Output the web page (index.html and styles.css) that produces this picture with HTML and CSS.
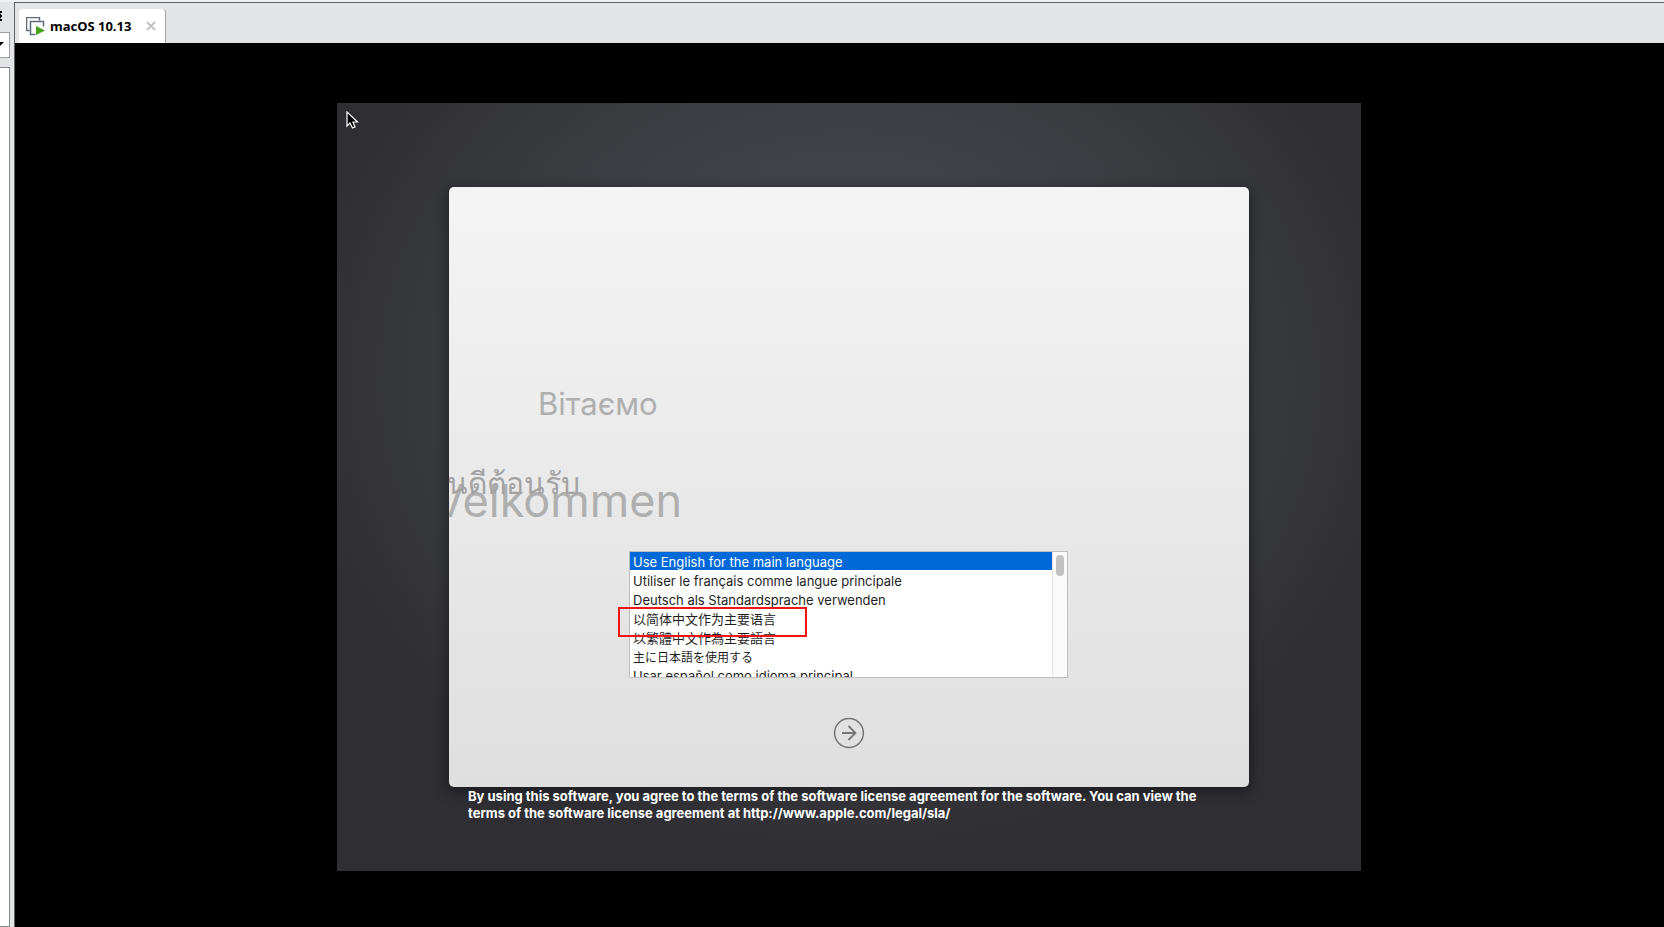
FILE: index.html
```html
<!DOCTYPE html>
<html lang="en">
<head>
<meta charset="utf-8">
<title>macOS 10.13</title>
<link rel="stylesheet" href="styles.css">
</head>
<body>
<div class="window">
  <aside class="sidebar">
    <button class="sidebar-close" aria-label="Close library">
      <svg width="10" height="10" viewBox="0 0 10 10"><path d="M2 1H0M-2 1l3 4-3 4M2 9H0" fill="none" stroke="#000" stroke-width="2"/></svg>
    </button>
    <button class="sidebar-filter" aria-label="Filter">
      <svg width="8" height="6" viewBox="0 0 8 6"><path d="M-3 0h7L0 4z" fill="#000"/></svg>
    </button>
    <div class="sidebar-tree"></div>
  </aside>
  <main class="workspace">
    <nav class="tabs">
      <div class="tab">
        <svg class="tab-icon" width="19" height="19" viewBox="0 0 19 19">
          <path d="M3.500 13.500h-3v-13h13v3" fill="none" stroke="#5d6b7b" stroke-width="1.500"/>
          <path d="M9.500 17.500h-5v-13h13v5" fill="none" stroke="#5d6b7b" stroke-width="1.500"/>
          <path d="M10 9v9l9-4.500z" fill="#46a01a"/>
        </svg>
        <span class="tab-title">macOS 10.13</span>
        <button class="tab-close" aria-label="Close tab">
          <svg width="10" height="10" viewBox="0 0 10 10"><path d="M1 1l8 8M9 1l-8 8" stroke="#c3c3c3" stroke-width="2"/></svg>
        </button>
      </div>
    </nav>
    <div class="viewport">
      <section class="guest">
        <svg class="cursor" width="13" height="19" viewBox="0 0 13 19">
          <path d="M1 1v14l3-3 2.500 5 2.500-1-2-5h4.500z" fill="#000" stroke="#fff" stroke-width="1.200"/>
        </svg>
        <form class="panel">
          <div class="greetings">
            <span class="greeting greeting-uk" lang="uk">Вітаємо</span>
            <span class="greeting greeting-da" lang="da">Velkommen</span>
            <span class="greeting greeting-th" lang="th">ยินดีต้อนรับ</span>
          </div>
          <div class="picker">
            <select class="languages" size="7" aria-label="Language">
              <option selected>Use English for the main language</option>
              <option>Utiliser le français comme langue principale</option>
              <option>Deutsch als Standardsprache verwenden</option>
              <option class="chinese" lang="zh-Hans">以简体中文作为主要语言</option>
              <option class="chinese" lang="zh-Hant">以繁體中文作為主要語言</option>
              <option class="japanese" lang="ja">主に日本語を使用する</option>
              <option>Usar español como idioma principal</option>
            </select>
            <div class="scroll-track"><div class="scroll-thumb"></div></div>
            <div class="highlight"></div>
          </div>
          <button class="next" type="button" aria-label="Continue">
            <svg width="32" height="32" viewBox="0 0 32 32" fill="none" stroke="#757575">
              <circle cx="16" cy="16" r="14.400" stroke-width="1.500"/>
              <path d="M9 16h14M15.500 9l7 7-7 7" stroke-width="1.800"/>
            </svg>
          </button>
        </form>
        <p class="license">By using this software, you agree to the terms of the software license agreement for the software. You can view the terms of the software license agreement at http://www.apple.com/legal/sla/</p>
      </section>
    </div>
  </main>
</div>
</body>
</html>
```
FILE: styles.css
```css
* { box-sizing: border-box; }

body {
  margin: 0;
  background: #e3e4e6;
  font-family: Inter, "Noto Sans CJK SC", sans-serif;
}

button {
  display: block;
  padding: 0;
  border: 0;
  background: none;
}

svg { display: block; }

.window {
  display: flex;
  height: 100vh;
  overflow: hidden;
  border-top: 2px solid #f0f0f0;
}

.sidebar {
  display: flex;
  flex-direction: column;
  width: 14px;
  padding-right: 4px;
}

.sidebar-close { padding-top: 9px; height: 30px; }
.sidebar-close svg { margin-bottom: 11px; }

.sidebar-filter {
  height: 26px;
  border: 1px solid #a0a0a0;
  border-left: 0;
  background: #fff;
}

.sidebar-tree {
  flex: 1;
  margin-top: 9px;
  border: 1px solid #828790;
  border-left: 0;
  background: #fff;
}

.workspace {
  display: flex;
  flex-direction: column;
  flex: 1;
  min-width: 0;
  border-top: 1px solid #646464;
  border-left: 1px solid #646464;
}

.tabs {
  display: flex;
  align-items: flex-end;
  height: 40px;
  padding-left: 4px;
}

.tab {
  display: flex;
  align-items: center;
  width: 147px;
  height: 34px;
  padding: 0 9px 0 7px;
  border-right: 1px solid #a0a0a0;
  border-radius: 4px 4px 0 0;
  background: #fff;
}

.tab-title {
  margin-left: 5px;
  font: bold 13px/16px "Noto Sans", sans-serif;
  color: #000;
}

.tab-close { margin-left: auto; }

.viewport {
  display: flex;
  flex: 1;
  justify-content: center;
  align-items: flex-start;
  padding: 60px 0 0 19px;
  background: #000;
}

.guest {
  position: relative;
  width: 1024px;
  height: 768px;
  padding: 84px 112px 0;
  background: radial-gradient(ellipse 560px 480px at 50% 36%, #4a4b4f 0%, #404146 50%, #37383c 78%, #2f2e33 100%);
}

.cursor {
  position: absolute;
  top: 8px;
  left: 9px;
}

.panel {
  display: flex;
  flex-direction: column;
  align-items: center;
  height: 600px;
  border-radius: 5px;
  background: linear-gradient(#f4f4f4, #dfdfdf);
  box-shadow: 0 3px 14px rgba(0, 0, 0, 0.5);
}

.greetings {
  position: relative;
  width: 100%;
  height: 364px;
  overflow: hidden;
}

.greeting {
  position: absolute;
  white-space: nowrap;
  color: #afafaf;
}

.greeting-uk {
  top: 197px;
  left: 89px;
  font-size: 31px;
  line-height: 40px;
}

.greeting-da {
  top: 284px;
  right: 567px;
  font-size: 45px;
  line-height: 60px;
}

.greeting-th {
  top: 276px;
  right: 669px;
  font-size: 30px;
  line-height: 40px;
  color: #a3a3a3;
}

.picker {
  position: relative;
  display: flex;
  width: 439px;
  height: 127px;
  margin-right: 1px;
  border: 1px solid #bfbfbf;
  background: #fff;
}

.languages {
  flex: 1;
  height: 125px;
  padding: 0;
  border: 0;
  outline: 0;
  border-radius: 0;
  overflow: hidden;
  background: #fff;
  color: #1e1e1e;
  font: 13px/18px Inter, "Noto Sans CJK SC", sans-serif;
}

.languages option {
  height: 18px;
  min-height: 18px;
  margin-bottom: 1px;
  padding: 2px 3px 0;
}

.languages option:checked {
  background: linear-gradient(#0069d9, #0069d9);
  color: #fff;
}

.languages .chinese { padding-top: 0; }

.languages .japanese {
  padding-top: 1px;
  font-size: 12px;
}

.scroll-track {
  width: 15px;
  padding: 3px;
  border-left: 1px solid #e4e4e4;
  background: #fafafa;
}

.scroll-thumb {
  width: 8px;
  height: 21px;
  border-radius: 4px;
  background: #c1c1c1;
}

.highlight {
  position: absolute;
  top: 55px;
  left: -12px;
  width: 189px;
  height: 30px;
  border: 2px solid #f51414;
}

.next { margin-top: 39px; }

.license {
  margin: 0;
  padding: 1px 19px;
  font-size: 13px;
  font-weight: 700;
  line-height: 17px;
  color: #fff;
}
```
